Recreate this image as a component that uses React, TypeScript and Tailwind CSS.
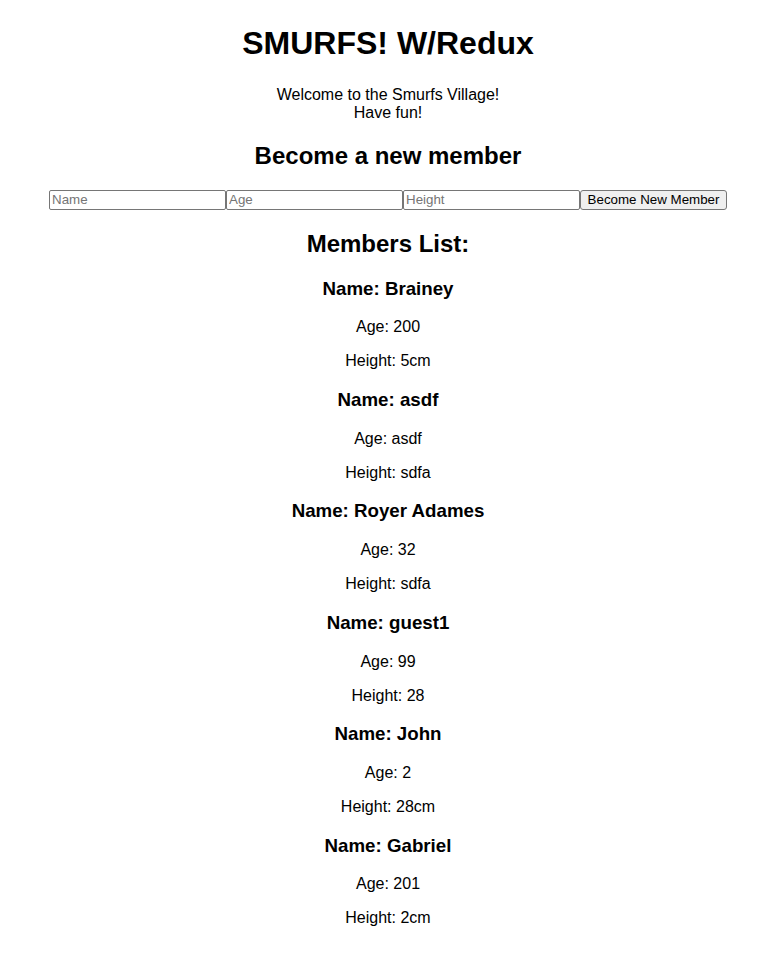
import React, { useState } from 'react';

interface Smurf {
  name: string;
  age: string;
  height: string;
}

const initialSmurfs: Smurf[] = [
  { name: 'Brainey', age: '200', height: '5cm' },
  { name: 'asdf', age: 'asdf', height: 'sdfa' },
  { name: 'Royer Adames', age: '32', height: 'sdfa' },
  { name: 'guest1', age: '99', height: '28' },
  { name: 'John', age: '2', height: '28cm' },
  { name: 'Gabriel', age: '201', height: '2cm' },
];

const App: React.FC = () => {
  const [smurfs, setSmurfs] = useState<Smurf[]>(initialSmurfs);
  const [form, setForm] = useState<Smurf>({ name: '', age: '', height: '' });

  const handleChange = (e: React.ChangeEvent<HTMLInputElement>) => {
    setForm({ ...form, [e.target.name]: e.target.value });
  };

  const handleSubmit = (e: React.FormEvent) => {
    e.preventDefault();
    if (!form.name) return;
    setSmurfs([...smurfs, form]);
    setForm({ name: '', age: '', height: '' });
  };

  const inputClass =
    "w-[177px] h-[20px] px-[2px] border border-[#767676] rounded-[2px] bg-white text-[13.33px] text-black placeholder:text-[#757575] font-['Liberation_Sans',Arial,sans-serif] outline-none align-middle";

  return (
    <div className="min-h-screen bg-white text-black font-['Liberation_Sans',Arial,sans-serif] text-[16px] leading-[normal] text-center pl-[7px] pt-[4px] pb-[8px]">
      <h1 className="text-[32px] font-bold mt-[21.44px] mb-[23.5px]">SMURFS! W/Redux</h1>
      <div className="my-[16px]">
        <div>Welcome to the Smurfs Village!</div>
        <div>Have fun!</div>
      </div>

      <h2 className="text-[24px] font-bold my-[19.92px]">Become a new member</h2>
      <form onSubmit={handleSubmit} className="flex justify-center items-center h-[20px]">
        <input name="name" placeholder="Name" value={form.name} onChange={handleChange} className={inputClass} />
        <input name="age" placeholder="Age" value={form.age} onChange={handleChange} className={inputClass} />
        <input name="height" placeholder="Height" value={form.height} onChange={handleChange} className={inputClass} />
        <button
          type="submit"
          className="w-[147px] h-[20px] px-[6px] border border-[#767676] rounded-[3px] bg-[#efefef] text-[13.33px] text-black font-['Liberation_Sans',Arial,sans-serif]"
        >
          Become New Member
        </button>
      </form>

      <h2 className="text-[24px] font-bold my-[19.92px]">Members List:</h2>
      <div>
        {smurfs.map((smurf, index) => (
          <div key={index}>
            <h3 className="text-[18.72px] font-bold my-[18.72px]">Name: {smurf.name}</h3>
            <p className="my-[16px]">Age: {smurf.age}</p>
            <p className="my-[16px]">Height: {smurf.height}</p>
          </div>
        ))}
      </div>
    </div>
  );
};

export default App;
